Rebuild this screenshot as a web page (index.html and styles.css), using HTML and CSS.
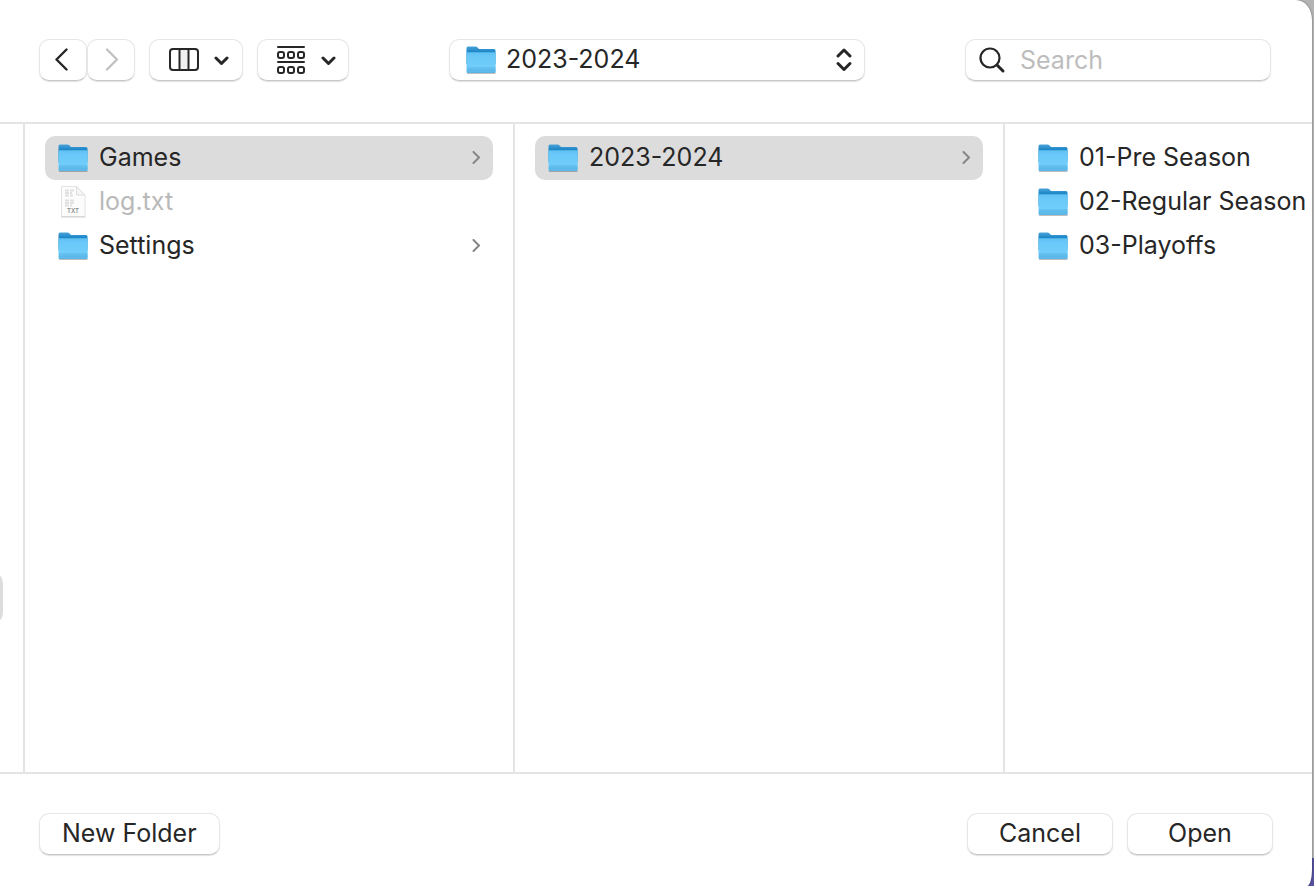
FILE: index.html
```html
<!DOCTYPE html>
<html lang="en">
<head>
    <meta charset="UTF-8">
    <meta name="viewport" content="width=device-width, initial-scale=1.0">
    <title>Open</title>
    <link rel="stylesheet" href="styles.css">
</head>
<body>

<svg class="defs" aria-hidden="true">
    <defs>
        <linearGradient id="folder-back" x1="0" y1="0" x2="0" y2="1">
            <stop offset="0" stop-color="#4aa3d8"/>
            <stop offset="0.3" stop-color="#1c86c6"/>
        </linearGradient>
        <linearGradient id="folder-front" x1="0" y1="0" x2="0" y2="1">
            <stop offset="0" stop-color="#5fc0f2"/>
            <stop offset="0.2" stop-color="#69c8f8"/>
            <stop offset="0.75" stop-color="#72cefb"/>
            <stop offset="1" stop-color="#58b3e3"/>
        </linearGradient>
        <symbol id="folder" viewBox="0 0 32 32">
            <path d="M2 28.500h28.500v1.500H2z" fill="#000" opacity=".25"/>
            <path d="M1.500 4q0-1.500 1.500-1.500h7.500q1 0 1.800.8L14 5h15q1.500 0 1.500 1.500V20h-29z" fill="url(#folder-back)"/>
            <path d="M1.500 9.500q0-1.200 1.200-1.200h26.800q1.200 0 1.200 1.200v18.300q0 1.200-1.200 1.200H2.700q-1.200 0-1.200-1.200z" fill="url(#folder-front)"/>
            <path d="M2 24h28.500M2 26h28.500" stroke="#4cabe0" stroke-width=".7" fill="none"/>
        </symbol>
        <symbol id="chevron" viewBox="0 0 10 14">
            <path d="M2.500 1l5.500 5.500L2.500 12" fill="none" stroke="currentColor" stroke-width="2" stroke-linecap="round" stroke-linejoin="round"/>
        </symbol>
        <symbol id="chevron-down" viewBox="0 0 16 10">
            <path d="M2 3l5.500 5.500L13 3" fill="none" stroke="currentColor" stroke-width="3" stroke-linecap="round" stroke-linejoin="round"/>
        </symbol>
    </defs>
</svg>

<main class="dialog">
    <header class="toolbar">
        <div class="nav">
            <button class="button nav-button" aria-label="Back">
                <svg width="16" height="24" viewBox="0 0 16 24"><path d="M11.500 1.500 1.500 11.500l10 10" fill="none" stroke="currentColor" stroke-width="2.400" stroke-linecap="round" stroke-linejoin="round"/></svg>
            </button>
            <button class="button nav-button" aria-label="Forward" disabled>
                <svg width="16" height="24" viewBox="0 0 16 24"><path d="M4 1.500l10 10-10 10" fill="none" stroke="currentColor" stroke-width="2.200" stroke-linecap="round" stroke-linejoin="round"/></svg>
            </button>
        </div>
        <button class="button menu-button" aria-label="View as columns">
            <svg width="32" height="30" viewBox="0 0 32 30">
                <path d="M11 4h10v22H11z" fill="#f0f0f0"/>
                <rect x="2" y="4" width="28" height="21" rx="3" fill="none" stroke="currentColor" stroke-width="2"/>
                <path d="M11.500 4v21M20.500 4v21" stroke="currentColor" stroke-width="2"/>
            </svg>
            <svg width="16" height="10"><use href="#chevron-down"/></svg>
        </button>
        <button class="button menu-button group-button" aria-label="Group items">
            <svg width="32" height="30" viewBox="0 0 32 30" fill="none" stroke="currentColor" stroke-width="2">
                <path d="M3 2h26M3 17h26" stroke-linecap="round"/>
                <rect x="3" y="7" width="6" height="6" rx="2"/>
                <rect x="13" y="7" width="6" height="6" rx="2"/>
                <rect x="23" y="7" width="6" height="6" rx="2"/>
                <rect x="3" y="22" width="6" height="6" rx="2"/>
                <rect x="13" y="22" width="6" height="6" rx="2"/>
                <rect x="23" y="22" width="6" height="6" rx="2"/>
            </svg>
            <svg width="16" height="10"><use href="#chevron-down"/></svg>
        </button>
        <div class="location">
            <svg class="location-icon" width="32" height="32"><use href="#folder"/></svg>
            <select class="button location-select" aria-label="Location">
                <option>2023-2024</option>
            </select>
            <svg class="location-arrows" width="18" height="26" viewBox="0 0 18 26"><path d="M3 9l6-6 6 6M3 16.500l6 6 6-6" fill="none" stroke="currentColor" stroke-width="3" stroke-linecap="round" stroke-linejoin="round"/></svg>
        </div>
        <label class="button search">
            <svg width="28" height="28" viewBox="0 0 28 28"><circle cx="12" cy="12" r="9.500" fill="none" stroke="currentColor" stroke-width="2.200"/><path d="M19 19l6 6" stroke="currentColor" stroke-width="3" stroke-linecap="round"/></svg>
            <input class="search-input" type="search" placeholder="Search" aria-label="Search">
        </label>
    </header>

    <section class="browser">
        <div class="column column-scrolled">
            <div class="row-end"></div>
        </div>
        <ul class="column">
            <li><a class="row selected" href="#">
                <svg class="icon"><use href="#folder"/></svg>
                <span class="name">Games</span>
                <svg class="arrow"><use href="#chevron"/></svg>
            </a></li>
            <li><a class="row disabled" href="#" aria-disabled="true">
                <svg class="icon" viewBox="0 0 32 32">
                    <path d="M4.500.5h15L28 9v21.500H4.500z" fill="#fcfcfc" stroke="#e2e2e2"/>
                    <path d="M4 31h24.500" stroke="#cfcfcf"/>
                    <path d="M19.500.5V9H28z" fill="#f5f5f5" stroke="#dcdcdc"/>
                    <path d="M8 4.500h9M8 7h7M8 9.500h8M8 14.500h9M8 17h9M8 19.500h7" stroke="#e0e0e0" stroke-width="2" stroke-dasharray="4 1"/>
                    <text x="10" y="27" class="file-type">TXT</text>
                </svg>
                <span class="name">log.txt</span>
            </a></li>
            <li><a class="row" href="#">
                <svg class="icon"><use href="#folder"/></svg>
                <span class="name">Settings</span>
                <svg class="arrow"><use href="#chevron"/></svg>
            </a></li>
        </ul>
        <ul class="column">
            <li><a class="row selected" href="#">
                <svg class="icon"><use href="#folder"/></svg>
                <span class="name">2023-2024</span>
                <svg class="arrow"><use href="#chevron"/></svg>
            </a></li>
        </ul>
        <ul class="column column-last">
            <li><a class="row" href="#">
                <svg class="icon"><use href="#folder"/></svg>
                <span class="name">01-Pre Season</span>
            </a></li>
            <li><a class="row" href="#">
                <svg class="icon"><use href="#folder"/></svg>
                <span class="name">02-Regular Season</span>
            </a></li>
            <li><a class="row" href="#">
                <svg class="icon"><use href="#folder"/></svg>
                <span class="name">03-Playoffs</span>
            </a></li>
        </ul>
    </section>

    <footer class="footer">
        <button class="button new-folder">New Folder</button>
        <button class="button action">Cancel</button>
        <button class="button action">Open</button>
    </footer>
</main>

</body>
</html>
```

FILE: styles.css
```css
* {
    box-sizing: border-box;
}

body {
    margin: 0;
    font-family: Inter, "Liberation Sans", sans-serif;
    font-size: 25px;
    line-height: 30px;
    color: #262626;
    background: linear-gradient(to top, #5552a0 28px, #b4b4b4 28px);
}

.defs {
    position: absolute;
    width: 0;
    height: 0;
}

.dialog {
    display: flex;
    flex-direction: column;
    min-height: 100vh;
    margin-right: 2px;
    background-color: #fff;
    border-radius: 0 16px 5px 0 / 0 20px 16px 0;
    box-shadow: 0 0 2px rgba(0, 0, 0, 0.5);
    overflow: hidden;
}

.toolbar {
    display: flex;
    align-items: center;
    gap: 14px;
    height: 124px;
    padding: 0 41px 2px 39px;
    border-bottom: 2px solid #e4e4e4;
}

.button {
    height: 42px;
    padding: 0;
    font: inherit;
    color: inherit;
    background-color: #fff;
    border: 1px solid #e6e6e6;
    border-bottom-color: #c8c8c8;
    border-radius: 10px;
    box-shadow: 0 1px 1px rgba(0, 0, 0, 0.12);
}

.nav {
    display: flex;
}

.nav-button {
    display: flex;
    align-items: center;
    justify-content: center;
    width: 48px;
}

.nav-button:disabled {
    color: #bfbfbf;
}

.menu-button {
    display: flex;
    align-items: center;
    justify-content: center;
    gap: 14px;
    width: 94px;
    padding-left: 6px;
}

.group-button {
    width: 92px;
}

.location {
    position: relative;
    width: 416px;
    margin: 0 auto;
}

.location-select {
    display: block;
    width: 100%;
    padding: 0 40px 2px 56px;
    appearance: none;
}

.location-icon {
    position: absolute;
    left: 16px;
    top: 5px;
}

.location-arrows {
    position: absolute;
    right: 12px;
    top: 8px;
    pointer-events: none;
}

.search {
    display: flex;
    align-items: center;
    gap: 14px;
    width: 306px;
    padding: 0 12px;
}

.search-input {
    flex: 1;
    min-width: 0;
    padding: 0;
    font: inherit;
    color: inherit;
    background: none;
    border: none;
    outline: none;
}

.search-input::placeholder {
    color: #bdbdbd;
}

.browser {
    display: flex;
    flex: 1;
    overflow: hidden;
}

.column {
    flex: 0 0 490px;
    margin: 0;
    padding: 12px 20px;
    list-style: none;
    border-right: 2px solid #e4e4e4;
}

.column-scrolled {
    flex-basis: 25px;
    padding: 452px 0 0;
}

.column-last {
    flex: 1 0 0;
    min-width: 0;
    border-right: none;
}

/* right end of a selected row in the column that is scrolled away */
.row-end {
    width: 3px;
    height: 44px;
    background-color: #dcdcdc;
    border-radius: 0 3px 3px 0 / 0 10px 10px 0;
}

.row {
    display: flex;
    align-items: center;
    gap: 10px;
    height: 44px;
    padding: 0 12px;
    color: inherit;
    text-decoration: none;
    white-space: nowrap;
    border-radius: 10px;
}

.selected {
    background-color: #dcdcdc;
}

.disabled {
    color: #b9b9b9;
}

.icon {
    flex: none;
    width: 32px;
    height: 32px;
}

.name {
    flex: 1;
    padding-bottom: 2px;
}

.arrow {
    width: 10px;
    height: 14px;
    color: #868686;
}

.file-type {
    font-size: 6px;
    font-weight: 600;
    fill: #8a8a8a;
}

.footer {
    display: flex;
    align-items: center;
    gap: 14px;
    height: 114px;
    padding: 8px 39px 0;
    border-top: 2px solid #e4e4e4;
}

.new-folder {
    margin-right: auto;
    padding: 0 22px 2px;
}

.action {
    width: 146px;
    padding-bottom: 2px;
}
```
